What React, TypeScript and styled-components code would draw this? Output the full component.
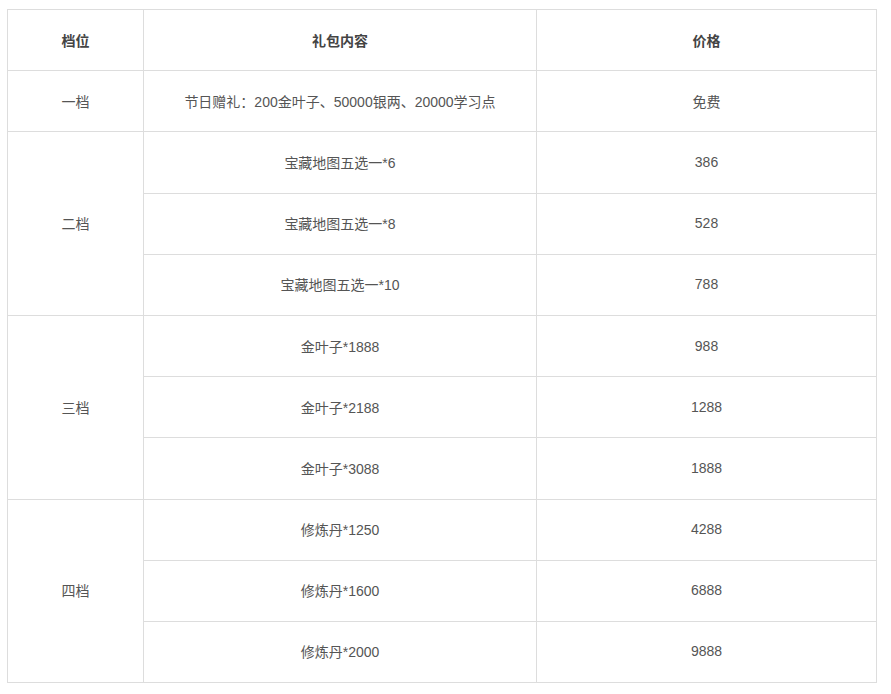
import React from "react";
import styled, { createGlobalStyle } from "styled-components";

type Item = { content: string; price: string };
type Tier = { name: string; items: Item[] };

const tiers: Tier[] = [
  { name: "一档", items: [{ content: "节日赠礼：200金叶子、50000银两、20000学习点", price: "免费" }] },
  {
    name: "二档",
    items: [
      { content: "宝藏地图五选一*6", price: "386" },
      { content: "宝藏地图五选一*8", price: "528" },
      { content: "宝藏地图五选一*10", price: "788" },
    ],
  },
  {
    name: "三档",
    items: [
      { content: "金叶子*1888", price: "988" },
      { content: "金叶子*2188", price: "1288" },
      { content: "金叶子*3088", price: "1888" },
    ],
  },
  {
    name: "四档",
    items: [
      { content: "修炼丹*1250", price: "4288" },
      { content: "修炼丹*1600", price: "6888" },
      { content: "修炼丹*2000", price: "9888" },
    ],
  },
];

const GlobalStyle = createGlobalStyle`
  body {
    margin: 9px 7px;
    background: #fff;
    font-family: "Liberation Sans", "Noto Sans CJK SC", sans-serif;
  }
`;

const Table = styled.table`
  border-collapse: collapse;
  table-layout: fixed;
  font-size: 14px;
  color: #555;
`;

const Row = styled.tr`
  height: 61.2px;
`;

const HeadCell = styled.th<{ $w: number }>`
  width: ${(p) => p.$w}px;
  border: 1px solid #ddd;
  font-weight: bold;
  color: #444;
  text-align: center;
  vertical-align: middle;
  padding: 0;
`;

const Cell = styled.td`
  border: 1px solid #ddd;
  text-align: center;
  vertical-align: middle;
  padding: 0 0 1px;
`;

export default function App() {
  return (
    <>
      <GlobalStyle />
      <Table>
        <thead>
          <Row>
            <HeadCell $w={135}>档位</HeadCell>
            <HeadCell $w={392}>礼包内容</HeadCell>
            <HeadCell $w={339}>价格</HeadCell>
          </Row>
        </thead>
        <tbody>
          {tiers.map((t) =>
            t.items.map((it, i) => (
              <Row key={t.name + i}>
                {i === 0 && <Cell rowSpan={t.items.length}>{t.name}</Cell>}
                <Cell>{it.content}</Cell>
                <Cell>{it.price}</Cell>
              </Row>
            ))
          )}
        </tbody>
      </Table>
    </>
  );
}
